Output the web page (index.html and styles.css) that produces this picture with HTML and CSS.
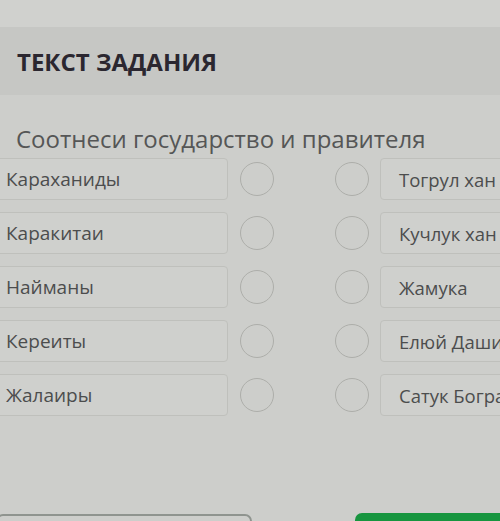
FILE: index.html
```html
<!DOCTYPE html>
<html lang="ru">
<head>
<meta charset="utf-8">
<link rel="stylesheet" href="styles.css">
</head>
<body>
<div class="page">
  <div class="topbar"></div>
  <div class="header"><h1 class="title">ТЕКСТ ЗАДАНИЯ</h1></div>
  <div class="content">
    <p class="prompt">Соотнеси государство и правителя</p>
    <div class="rows">
      <div class="row"><div class="box left">Караханиды</div><span class="dot d1"></span><span class="dot d2"></span><div class="box right">Тогрул хан</div></div>
      <div class="row"><div class="box left">Каракитаи</div><span class="dot d1"></span><span class="dot d2"></span><div class="box right">Кучлук хан</div></div>
      <div class="row"><div class="box left">Найманы</div><span class="dot d1"></span><span class="dot d2"></span><div class="box right">Жамука</div></div>
      <div class="row"><div class="box left">Кереиты</div><span class="dot d1"></span><span class="dot d2"></span><div class="box right">Елюй Даши</div></div>
      <div class="row"><div class="box left">Жалаиры</div><span class="dot d1"></span><span class="dot d2"></span><div class="box right">Сатук Богра-хан</div></div>
    </div>
    <div class="buttons">
      <div class="btn btn-outline"></div>
      <div class="btn btn-green"></div>
    </div>
  </div>
</div>
</body>
</html>
```

FILE: styles.css
```css
html, body {
  margin: 0;
  padding: 0;
}
body {
  width: 500px;
  height: 521px;
  overflow: hidden;
  background: #cdcecb;
  font-family: "Open Sans", "DejaVu Sans", sans-serif;
}
.page {
  width: 500px;
  height: 521px;
  overflow: hidden;
  display: flex;
  flex-direction: column;
}
.topbar {
  height: 27px;
  background: #d0d1ce;
  flex-shrink: 0;
}
.header {
  height: 68px;
  background: #c6c7c4;
  display: flex;
  align-items: center;
  padding-left: 17px;
  flex-shrink: 0;
}
.title {
  margin: 0;
  font-size: 24px;
  font-weight: 700;
  color: #2b2730;
  letter-spacing: 0;
}
.content {
  flex: 1;
  display: flex;
  flex-direction: column;
  background: #cdcecb;
}
.prompt {
  margin: 28px 0 0 16px;
  font-size: 24px;
  line-height: 32px;
  color: #555656;
  white-space: nowrap;
}
.rows {
  margin-top: 2px;
  display: flex;
  flex-direction: column;
  gap: 10px;
}
.row {
  display: flex;
  align-items: center;
  height: 44px;
}
.box {
  height: 42px;
  border: 1px solid #bfc0bc;
  border-radius: 4px;
  background: #cfd0cd;
  display: flex;
  align-items: center;
  font-size: 19px;
  color: #4c4d4d;
  white-space: nowrap;
  overflow: hidden;
  box-sizing: border-box;
  flex-shrink: 0;
}
.left {
  width: 232px;
  margin-left: -4px;
  padding-left: 9px;
}
.right {
  width: 150px;
  margin-left: 11px;
  padding-left: 18px;
  font-size: 18.5px;
}
.dot {
  width: 34px;
  height: 34px;
  box-sizing: border-box;
  border: 1.5px solid #adaeaa;
  border-radius: 50%;
  flex-shrink: 0;
}
.d1 { margin-left: 12px; }
.d2 { margin-left: 61px; }
.buttons {
  margin-top: auto;
  display: flex;
  height: 8px;
  align-items: flex-start;
}
.btn {
  height: 40px;
  border-radius: 7px;
  flex-shrink: 0;
  box-sizing: border-box;
}
.btn-outline {
  width: 256px;
  margin-left: -4px;
  border: 2px solid #8f948f;
  margin-top: 1px;
}
.btn-green {
  width: 160px;
  margin-left: 103px;
  background: #17953f;
}
```
